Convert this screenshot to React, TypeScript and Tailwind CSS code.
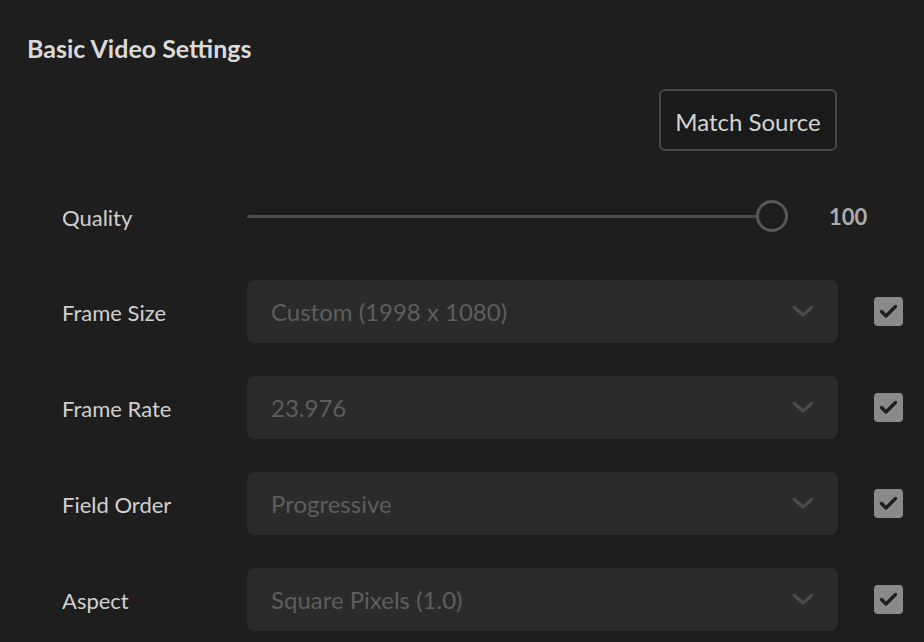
const rows = [
  { label: 'Frame Size', value: 'Custom (1998 x 1080)' },
  { label: 'Frame Rate', value: '23.976' },
  { label: 'Field Order', value: 'Progressive' },
  { label: 'Aspect', value: 'Square Pixels (1.0)' },
];

const CheckBox = () => (
  <div className="w-[29px] h-[29px] rounded-[4px] bg-[#8a8a8a] flex items-center justify-center">
    <svg width="19" height="15" viewBox="0 0 19 15" fill="none">
      <path d="M2.5 7.5 L7 12 L16.5 2.5" stroke="#1f1f1f" strokeWidth="3.4" strokeLinecap="round" strokeLinejoin="round" />
    </svg>
  </div>
);

const Chevron = () => (
  <svg width="22" height="13" viewBox="0 0 22 13" fill="none">
    <path d="M2.5 2.5 L11 10 L19.5 2.5" stroke="#4a4a4a" strokeWidth="3.5" strokeLinecap="round" strokeLinejoin="round" />
  </svg>
);

const App = () => {
  return (
    <div className="w-[924px] h-[642px] overflow-hidden bg-[#1e1e1e] text-[#d0d0d0]" style={{ fontFamily: 'Lato, "Open Sans", sans-serif' }}>
      <h2 className="pl-[27px] pt-[34px] text-[25px] leading-[28px] font-bold text-[#dadada]">Basic Video Settings</h2>

      <div className="flex justify-end pr-[87px] mt-[27px]">
        <button className="w-[178px] h-[62px] rounded-[6px] border-2 border-[#474747] bg-[#1a1a1a] text-[24px] text-[#d4d4d4] pt-[3px]">
          Match Source
        </button>
      </div>

      <div className="flex items-center h-[64px] mt-[33px] pl-[62px]">
        <div className="w-[185px] text-[22px] pt-[2px]">Quality</div>
        <div className="relative w-[541px] h-[32px] flex items-center">
          <div className="w-[511px] h-[3px] bg-[#4a4a4a] rounded-full" />
          <div className="absolute right-0 top-0 w-[32px] h-[32px] rounded-full border-[3px] border-[#585858] bg-[#1e1e1e]" />
        </div>
        <div className="ml-[41px] text-[22px] font-bold text-[#ababab]">100</div>
      </div>

      <div className="mt-[32px] flex flex-col gap-[33px]">
        {rows.map(r => (
          <div key={r.label} className="flex items-center h-[63px] pl-[62px]">
            <div className="w-[185px] text-[22px] pt-[2px]">{r.label}</div>
            <div className="w-[591px] h-[63px] rounded-[8px] bg-[#2b2b2b] flex items-center justify-between pl-[24px] pr-[24px]">
              <span className="text-[24px] text-[#5e5e5e]">{r.value}</span>
              <Chevron />
            </div>
            <div className="ml-[36px]">
              <CheckBox />
            </div>
          </div>
        ))}
      </div>
    </div>
  );
};

export default App;
